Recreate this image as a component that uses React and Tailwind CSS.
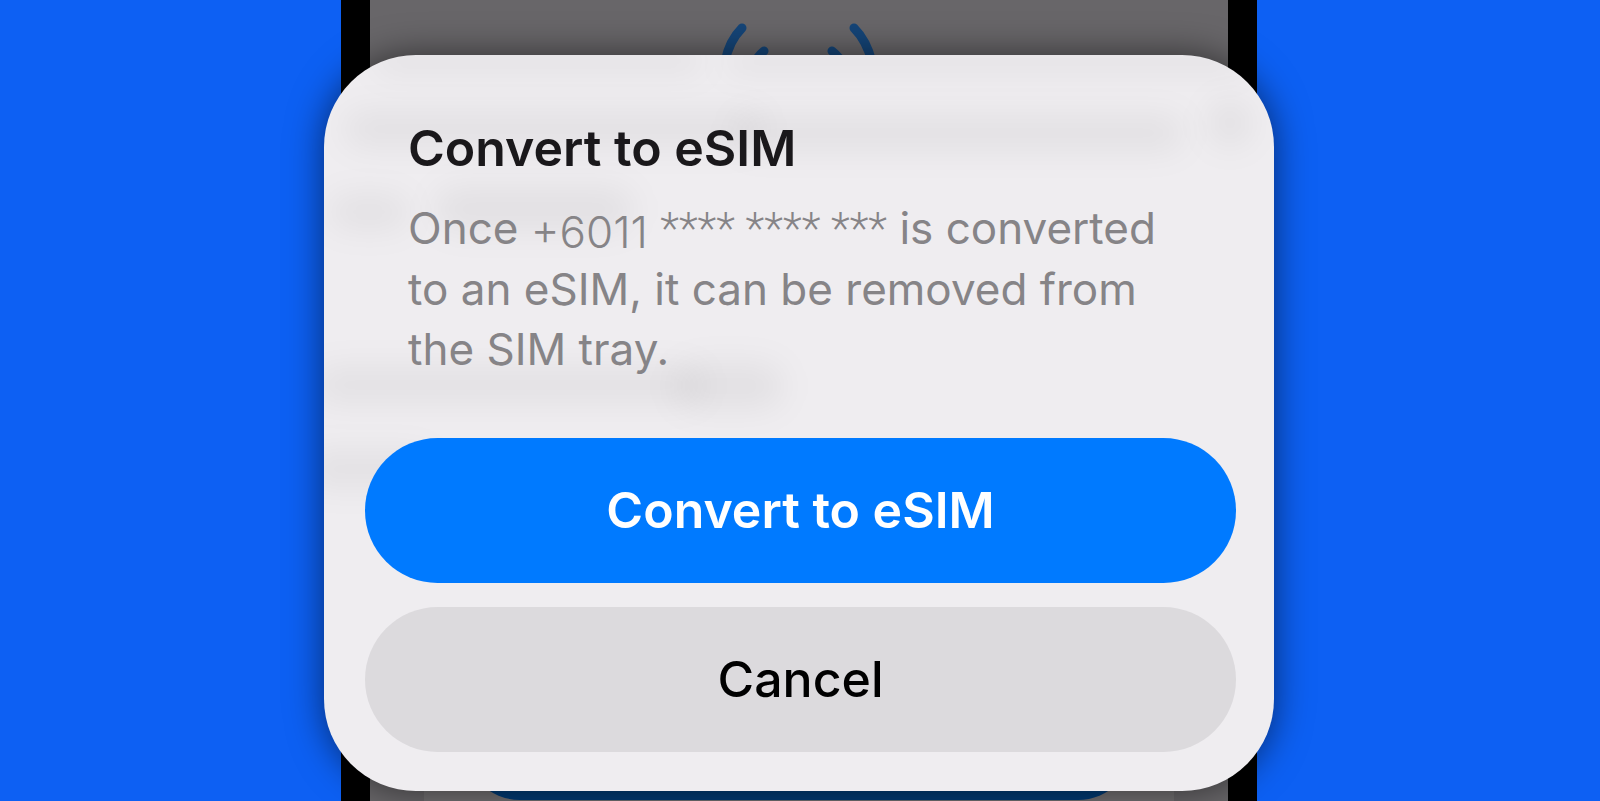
import React, { useState } from 'react';

// Soft shades of the page that show through the sheet
const shades = [
    { left: 50, top: -6, width: 330, height: 24 },
    { left: 400, top: -4, width: 520, height: 22 },
    { left: 20, top: 56, width: 420, height: 36 },
    { left: 410, top: 60, width: 450, height: 36 },
    { left: 884, top: 44, width: 44, height: 48 },
    { left: 5, top: 140, width: 80, height: 34 },
    { left: 110, top: 132, width: 200, height: 44 },
    { left: -10, top: 312, width: 390, height: 36 },
    { left: 350, top: 308, width: 110, height: 46 },
    { left: -20, top: 396, width: 130, height: 36 },
];

// The dimmed phone behind the sheet
function Phone() {
    return (
        <div
            aria-hidden="true"
            className="col-start-1 row-start-1 w-[916px] max-w-full border-x-[29px] border-black bg-[#686669] flex flex-col items-center justify-between overflow-hidden"
        >
            <svg className="w-[160px] h-[70px]" viewBox="0 0 160 70" fill="none" stroke="#154578" strokeWidth="9" strokeLinecap="round">
                <path d="M23 28C15 36 9 46 6 62" />
                <path d="M135 28C143 36 149 46 153 62" />
                <path d="M45 51C40 55 37 59 34 66" />
                <path d="M113 51C118 55 122 59 125 66" />
            </svg>
            <div className="w-[750px] h-[120px] bg-[#737173] pb-0.5 flex items-end justify-center">
                <div className="w-[670px] h-[112px] rounded-full bg-[#003b75]" />
            </div>
        </div>
    );
}

export default function App() {
    const [status, setStatus] = useState('idle');

    return (
        <main className="min-h-screen bg-[#0d60f3] font-[Inter,'Liberation_Sans',sans-serif] grid justify-items-center pr-0.5 overflow-hidden">
            <Phone />

            <div className="col-start-1 row-start-1 w-full flex justify-center items-start pt-[55px] pb-[11px]">
                <section
                    role="dialog"
                    aria-labelledby="esim-title"
                    data-status={status}
                    className="relative w-[950px] rounded-[92px] bg-[#efedf0] shadow-[0_0_36px_rgba(0,0,0,0.55)]"
                >
                    <div className="absolute inset-0 rounded-[92px] overflow-hidden">
                        {shades.map((shade, idx) => (
                            <div key={idx} className="absolute rounded-full bg-black/5 blur-[16px]" style={shade} />
                        ))}
                    </div>

                    <div className="relative pl-[41px] pr-[38px] pt-[63px] pb-[39px]">
                        <div className="pl-[43px]">
                            <h1 id="esim-title" className="text-[50px] leading-[60px] font-semibold text-[#1a181b]">
                                Convert to eSIM
                            </h1>
                            <p className="mt-5 text-[44px] leading-[60px] text-[#868487]">
                                Once <span className="inline-block align-middle leading-none font-light">+6011</span>{' '}
                                <span className="font-[Roboto,sans-serif] font-light">**** **** ***</span> is converted
                                <br />
                                to an eSIM, it can be removed from
                                <br />
                                the SIM tray.
                            </p>
                        </div>

                        <div className="mt-[59px] flex flex-col gap-6">
                            <button
                                type="button"
                                onClick={() => setStatus('converting')}
                                className="h-[145px] rounded-full bg-[#007aff] text-[50px] font-semibold text-white"
                            >
                                Convert to eSIM
                            </button>
                            <button
                                type="button"
                                onClick={() => setStatus('cancelled')}
                                className="h-[145px] rounded-full bg-[#dcdadd] text-[50px] font-medium text-black"
                            >
                                Cancel
                            </button>
                        </div>
                    </div>
                </section>
            </div>
        </main>
    );
}
